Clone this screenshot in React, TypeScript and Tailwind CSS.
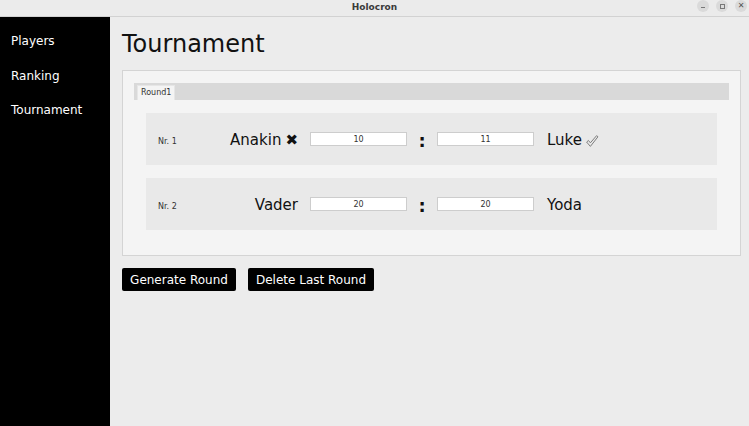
import React from "react";

interface Match {
  nr: number;
  left: string;
  right: string;
  leftScore: string;
  rightScore: string;
  winner?: "left" | "right";
}

const matches: Match[] = [
  { nr: 1, left: "Anakin", right: "Luke", leftScore: "10", rightScore: "11", winner: "right" },
  { nr: 2, left: "Vader", right: "Yoda", leftScore: "20", rightScore: "20" },
];

function CheckOutline() {
  return (
    <svg width="14" height="14" viewBox="0 0 13 13" className="ml-[3px] mt-[1px]">
      <path
        d="M1.5 7.5 L3.2 6 L5 8.2 L10.8 1.5 L12 2.6 L5 11.5 Z"
        fill="none"
        stroke="#7a7a7a"
        strokeWidth="0.9"
        strokeLinejoin="round"
      />
    </svg>
  );
}

function MatchRow({ match }: { match: Match }) {
  return (
    <div className="flex h-[52px] items-center bg-[#e9e9e9] px-[12px]">
      <div className="mt-[5px] w-[60px] text-[8px] text-[#333]">Nr. {match.nr}</div>
      <div className="mt-[3px] flex w-[80px] items-center justify-end text-[15px] text-[#111]">
        <span>{match.left}</span>
        {match.winner === "right" && <span className="ml-[4px] text-[15px] leading-none">✖</span>}
      </div>
      <div className="ml-[12px] flex h-[14px] w-[97px] items-center justify-center border border-[#cdcdcd] bg-white pt-[2px] text-[8px] text-[#333]">
        {match.leftScore}
      </div>
      <div className="w-[30px] pt-[3px] text-center text-[18px] font-bold leading-none text-[#111]">:</div>
      <div className="flex h-[14px] w-[97px] items-center justify-center border border-[#cdcdcd] bg-white pt-[2px] text-[8px] text-[#333]">
        {match.rightScore}
      </div>
      <div className="ml-[13px] mt-[3px] flex items-center text-[15px] text-[#111]">
        <span>{match.right}</span>
        {match.winner === "right" && <CheckOutline />}
      </div>
    </div>
  );
}

export default function App() {
  return (
    <div className="flex h-[426px] w-[749px] flex-col overflow-hidden font-['DejaVu_Sans',sans-serif]">
      {/* Title bar */}
      <div className="relative flex h-[17px] items-center justify-center border-b border-[#d2d2d2] bg-[#ebebeb]">
        <span className="text-[9px] font-bold text-[#3a3a3a]">Holocron</span>
        <div className="absolute right-[2px] top-[0px] flex gap-[7px]">
          <div className="flex h-[12px] w-[12px] items-center justify-center rounded-full bg-[#dadada]">
            <div className="mt-[3px] h-[1px] w-[4px] bg-[#777]" />
          </div>
          <div className="flex h-[12px] w-[12px] items-center justify-center rounded-full bg-[#dadada]">
            <div className="h-[5px] w-[5px] border border-[#777]" />
          </div>
          <div className="flex h-[12px] w-[12px] items-center justify-center rounded-full bg-[#dadada] text-[8px] leading-none text-[#555]">
            ✕
          </div>
        </div>
      </div>

      <div className="flex flex-1">
        {/* Sidebar */}
        <div className="flex w-[110px] flex-col bg-black pt-[16px] text-[12px] text-white">
          <div className="h-[34.5px] pl-[11px] leading-[16px]">Players</div>
          <div className="h-[34.5px] pl-[11px] leading-[16px]">Ranking</div>
          <div className="h-[34.5px] pl-[11px] leading-[16px]">Tournament</div>
        </div>

        {/* Main */}
        <div className="flex-1 bg-[#ececec] pl-[12px] pr-[8px]">
          <h1 className="mt-[13px] h-[40px] text-[24px] leading-[28px] text-[#111]">Tournament</h1>

          <div className="border border-[#d4d4d4] bg-[#f4f4f4] px-[11px] pb-[25px] pt-[12px]">
            <div className="flex h-[17px] items-end bg-[#d9d9d9] pl-[3px]">
              <div className="flex h-[15px] items-center border-x border-t border-[#e6e6e6] bg-[#f4f4f4] px-[3px] text-[8px] text-[#333]">
                Round1
              </div>
            </div>
            <div className="flex flex-col gap-[13px] px-[12px] pt-[13px]">
              {matches.map((m) => (
                <MatchRow key={m.nr} match={m} />
              ))}
            </div>
          </div>

          <div className="mt-[12px] flex gap-[12px]">
            <button className="h-[23px] w-[114px] rounded-[2px] bg-black text-[12px] text-white">Generate Round</button>
            <button className="h-[23px] w-[126px] rounded-[2px] bg-black text-[12px] text-white">Delete Last Round</button>
          </div>
        </div>
      </div>
    </div>
  );
}
